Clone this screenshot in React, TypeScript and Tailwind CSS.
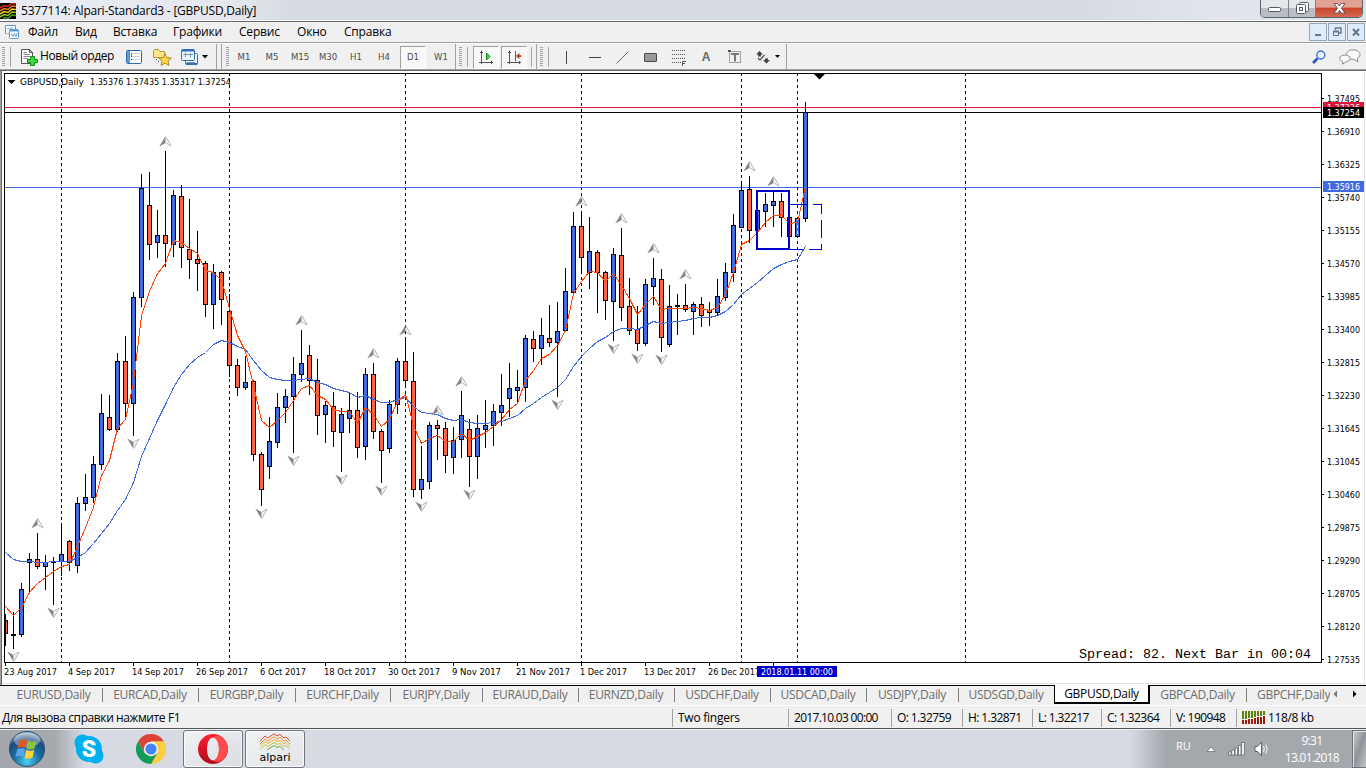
import type { ReactNode } from 'react';

// [high, body top, body bottom, low, up(1) / down(0)], one bar every 8px from x = 5
const BARS: number[][] = [
  [614, 620, 634, 646, 0], [612, 634, 636, 649, 1], [583, 589, 635, 637, 1], [553, 559, 563, 592, 1],
  [533, 559, 567, 569, 0], [555, 562, 567, 590, 1], [557, 562, 563, 605, 1], [523, 554, 562, 576, 1],
  [540, 541, 563, 571, 0], [497, 503, 566, 573, 1], [474, 497, 504, 511, 1], [456, 464, 498, 503, 1],
  [394, 413, 465, 470, 1], [395, 417, 430, 431, 0], [353, 361, 430, 432, 1], [336, 361, 404, 417, 0],
  [292, 297, 404, 436, 1], [174, 188, 298, 307, 1], [172, 205, 245, 260, 0], [210, 235, 243, 258, 1],
  [151, 235, 244, 267, 0], [190, 195, 245, 257, 1], [185, 196, 248, 268, 0], [199, 249, 260, 279, 0],
  [231, 259, 264, 291, 0], [261, 263, 305, 317, 0], [264, 272, 305, 329, 1], [271, 272, 300, 325, 0],
  [294, 311, 366, 377, 0], [359, 365, 388, 396, 0], [356, 382, 388, 390, 1], [380, 381, 455, 461, 0],
  [452, 454, 490, 506, 0], [417, 441, 467, 479, 1], [393, 407, 443, 448, 1], [389, 396, 408, 423, 1],
  [357, 374, 397, 453, 1], [330, 363, 375, 382, 1], [345, 355, 381, 395, 0], [359, 380, 416, 435, 0],
  [401, 405, 415, 443, 1], [392, 406, 432, 447, 0], [408, 414, 433, 472, 1], [393, 410, 419, 433, 1],
  [392, 410, 448, 458, 0], [368, 374, 447, 460, 1], [363, 374, 432, 439, 0], [429, 431, 451, 483, 0],
  [400, 404, 449, 453, 1], [358, 361, 405, 414, 1], [337, 361, 381, 385, 0], [352, 381, 490, 497, 0],
  [446, 479, 490, 499, 1], [422, 425, 482, 489, 1], [420, 425, 429, 460, 0], [422, 428, 456, 473, 0],
  [427, 440, 458, 474, 1], [391, 415, 440, 458, 1], [419, 429, 457, 487, 0], [415, 428, 457, 479, 1],
  [400, 425, 430, 448, 1], [404, 411, 426, 446, 1], [374, 405, 413, 426, 1], [363, 388, 399, 417, 1],
  [370, 387, 391, 403, 1], [335, 338, 388, 402, 1], [331, 339, 349, 362, 0], [318, 335, 349, 365, 1],
  [305, 338, 343, 347, 0], [302, 331, 343, 397, 1], [268, 291, 331, 332, 1], [212, 226, 293, 294, 1],
  [211, 226, 258, 274, 0], [217, 251, 273, 289, 1], [250, 252, 273, 313, 0], [271, 272, 301, 320, 0],
  [248, 254, 302, 341, 1], [228, 255, 308, 321, 0], [278, 306, 331, 335, 0], [306, 329, 344, 351, 0],
  [279, 284, 344, 346, 1], [258, 278, 287, 305, 1], [269, 279, 338, 352, 0], [285, 306, 345, 347, 1],
  [294, 305, 307, 335, 1], [284, 305, 310, 312, 0], [302, 304, 312, 335, 1], [297, 304, 316, 327, 0],
  [302, 310, 313, 326, 0], [279, 296, 313, 316, 1], [263, 272, 298, 301, 1], [214, 225, 273, 282, 1],
  [181, 190, 228, 228, 1], [176, 189, 231, 243, 0], [210, 210, 231, 231, 1], [193, 204, 212, 227, 1],
  [192, 201, 206, 227, 1], [193, 201, 218, 237, 0], [217, 217, 237, 237, 0], [218, 218, 237, 237, 1],
  [102, 112, 219, 222, 1],
];

const FAST = [
  606, 615, 607, 592, 583, 577, 571, 566, 564, 546, 527, 507, 475, 460, 428, 419, 382, 315, 291, 273, 263,
  240, 242, 248, 253, 270, 272, 280, 308, 335, 351, 385, 420, 427, 420, 412, 400, 388, 385, 395, 399, 409,
  411, 411, 423, 407, 414, 426, 419, 401, 394, 425, 443, 438, 435, 441, 441, 433, 440, 436, 432, 426, 419,
  409, 403, 380, 370, 358, 354, 345, 330, 293, 281, 271, 272, 281, 273, 285, 298, 314, 304, 296, 309, 308,
  308, 308, 307, 308, 310, 307, 294, 272, 244, 240, 232, 222, 215, 215, 223, 222, 186,
];

const SLOW = [
  552, 559, 561, 561, 562, 562, 561, 561, 561, 557, 552, 543, 533, 523, 510, 499, 482, 456, 438, 420, 404,
  387, 374, 364, 357, 352, 344, 340, 342, 346, 349, 360, 370, 377, 379, 380, 380, 379, 378, 382, 384, 388,
  390, 392, 397, 395, 399, 402, 402, 399, 397, 406, 412, 413, 414, 418, 420, 419, 422, 423, 423, 422, 421,
  418, 415, 408, 403, 397, 392, 387, 379, 366, 356, 348, 341, 337, 331, 328, 328, 329, 325, 321, 323, 322,
  321, 320, 318, 317, 317, 315, 311, 304, 294, 288, 282, 275, 268, 264, 261, 259, 246,
];

const UP = [
  [37, 523], [165, 141], [301, 320], [373, 353], [405, 330], [437, 410], [461, 381], [581, 201], [621, 218],
  [653, 248], [685, 274], [749, 166], [773, 181],
];
const DOWN = [
  [13, 656], [53, 612], [133, 443], [261, 513], [293, 460], [341, 479], [381, 490], [421, 506], [469, 494],
  [557, 404], [613, 348], [637, 358], [661, 359],
];

const PRICES = [
  '1.37495', '1.36910', '1.36325', '1.35740', '1.35155', '1.34570', '1.33985', '1.33400', '1.32815',
  '1.32230', '1.31645', '1.31045', '1.30460', '1.29875', '1.29290', '1.28705', '1.28120', '1.27535',
];

const DATES: [string, number][] = [
  ['23 Aug 2017', 53], ['4 Sep 2017', 47], ['14 Sep 2017', 52], ['26 Sep 2017', 52], ['6 Oct 2017', 46],
  ['18 Oct 2017', 52], ['30 Oct 2017', 52], ['9 Nov 2017', 49], ['21 Nov 2017', 54], ['1 Dec 2017', 47],
  ['13 Dec 2017', 52], ['26 Dec 2017', 52],
];

const line = (ys: number[]) => ys.map((y, i) => `${5.5 + i * 8},${y + 0.5}`).join(' ');

function Label({ x, y, w, fill = '#000', children }: { x: number; y: number; w: number; fill?: string; children: string }) {
  return (
    <text x={x} y={y} fill={fill} textLength={w} lengthAdjust="spacingAndGlyphs" fontSize="9.3">
      {children}
    </text>
  );
}

function Fractal({ x, y, down }: { x: number; y: number; down?: boolean }) {
  return (
    <g transform={`translate(${x + 0.5} ${y + 0.5}) scale(1 ${down ? -1 : 1})`}>
      <path d="M0 -5.5 L-6.2 5 L0 1.6 Z" fill="#858585" />
      <path d="M0.3 -5 L5.6 4.4 L0.5 1.6" fill="#fff" stroke="#a4adb6" strokeWidth="0.9" />
      <path d="M1.3 -2 V1.2" stroke="#e6dcae" strokeWidth="0.8" />
    </g>
  );
}

function Chart() {
  return (
    <svg width="1366" height="614" viewBox="0 71 1366 614" className="block shrink-0" fontFamily='"DejaVu Sans Condensed", "DejaVu Sans", sans-serif'>
      <rect x="0" y="71" width="1366" height="614" fill="#fff" />
      <g shapeRendering="crispEdges">
        <rect x="0" y="71" width="1" height="614" fill="#a0a0a0" />
        <rect x="1" y="71" width="1" height="614" fill="#696969" />
        <rect x="1364" y="71" width="1" height="614" fill="#e3e3e3" />
        <rect x="2" y="683" width="1363" height="1" fill="#e3e3e3" />
        {[61, 229, 405, 581, 741, 965].map((x) => (
          <path key={x} d={`M${x}.5 73V662`} stroke="#000" strokeDasharray="3 3" />
        ))}
        <path d="M5 107.5H1321" stroke="#dc143c" />
        <path d="M5 112.5H1321" stroke="#000" />
        <path d="M5 187.5H1321" stroke="#4169e1" />
        <path d="M797.5 73V662" stroke="#0000cd" strokeDasharray="3 3" />
        {BARS.map(([high, top, bottom, low, up], i) => {
          const x = 5 + i * 8;
          const left = i === 0 ? x : x - 2;
          return (
            <g key={i}>
              <rect x={x} y={high} width="1" height={low - high} fill="#000" />
              <rect x={left} y={top} width={x + 3 - left} height={bottom - top} fill="#000" />
              {bottom - top > 2 && (
                <rect x={left + 1} y={top + 1} width={x + 1 - left} height={bottom - top - 2} fill={up ? '#4169e1' : '#ff6347'} />
              )}
            </g>
          );
        })}
        <path d="M797.5 219V236" stroke="#c8d4ff" strokeDasharray="3 3" />
        <polyline points={line(SLOW)} fill="none" stroke="#4169e1" />
        <polyline points={line(FAST)} fill="none" stroke="#ff4500" />
        <rect x="757" y="191" width="32" height="58" fill="none" stroke="#0000cd" strokeWidth="2" />
        <path
          d="M790 204.5H808M813 204.5H822M821.5 204V214M821.5 220V238M821.5 244V250M790 249.5H803M809 249.5H822"
          stroke="#0000cd"
        />
        <path d="M4.5 662.5V73.5H1321.5V662.5Z" fill="none" stroke="#000" />
        {PRICES.map((p, i) => (
          <rect key={p} x="1322" y={98 + i * 33} width="2" height="1" fill="#000" />
        ))}
        {Array.from({ length: 13 }, (_, i) => (
          <rect key={i} x={5 + i * 64} y="663" width="1" height="3" fill="#000" />
        ))}
      </g>
      {UP.map(([x, y]) => <Fractal key={`u${x}`} x={x} y={y} />)}
      {DOWN.map(([x, y]) => <Fractal key={`d${x}`} x={x} y={y} down />)}
      <path d="M814 74H825L819.5 79.5Z" />
      <path d="M7.5 80H15.5L11.5 84Z" />
      <Label x={20} y={85} w={64}>GBPUSD,Daily</Label>
      <Label x={90} y={85} w={141}>1.35376 1.37435 1.35317 1.37254</Label>
      {PRICES.map((p, i) => <Label key={p} x={1327} y={102 + i * 33} w={33}>{p}</Label>)}
      <rect x="1323" y="102" width="41" height="12" fill="#dc143c" />
      <Label x={1327} y={111} w={33} fill="#fff">1.37336</Label>
      <rect x="1323" y="107" width="41" height="11" fill="#000" />
      <Label x={1327} y={116} w={33} fill="#fff">1.37254</Label>
      <rect x="1323" y="181" width="41" height="11" fill="#4169e1" />
      <Label x={1327} y={190} w={33} fill="#fff">1.35916</Label>
      {DATES.map(([d, w], i) => <Label key={d} x={4 + i * 64} y={675} w={w}>{d}</Label>)}
      <rect x="757" y="666" width="80" height="11" fill="#0000cd" />
      <Label x={761} y={675} w={72} fill="#fff">2018.01.11 00:00</Label>
      <text x="1079" y="658" fontSize="12" fontFamily='"Liberation Mono", monospace' textLength="232" lengthAdjust="spacingAndGlyphs">
        Spread: 82. Next Bar in 00:04
      </text>
    </svg>
  );
}

function WaveLogo() {
  return (
    <svg width="16" height="16" viewBox="0 0 16 16" fill="none" strokeWidth="1.5">
      <rect width="16" height="16" fill="#000" />
      <path d="M0 5L4 2.5L8 3.5L12 0L16 1" stroke="#d92b12" />
      <path d="M0 8L4 5.5L8 6.5L12 3L16 3.5" stroke="#ee7a18" />
      <path d="M0 11L4 8.5L8 9.5L12 6L16 6.5" stroke="#e9cf20" />
      <path d="M0 14L4 11.5L8 12.5L12 9L16 9.5" stroke="#9bc61c" />
      <path d="M3 15.5L5 14.5L8 15.5L12 12L16 12.5" stroke="#3e9e1e" />
    </svg>
  );
}

function TitleBar() {
  return (
    <div className="flex h-[21px] shrink-0 items-start border-b border-white bg-[linear-gradient(90deg,#e9edf3_0,#e4e8ee_230px,#d6dae3_290px,#d6dae3_1080px,#e2e6ec_1220px,#dde1e8_100%)]">
      <div className="mt-[3px] w-[21px]"><WaveLogo /></div>
      <div className="mt-[2px] text-[12px] leading-[18px] tracking-[-0.23px] whitespace-nowrap">5377114: Alpari-Standard3 - [GBPUSD,Daily]</div>
      <div className="mr-[3px] ml-auto flex h-[18px] w-[103px] overflow-hidden rounded-b-[5px] border border-t-0 border-[#5b6270]">
        <div className="flex w-[28px] items-center justify-center border-r border-[#7b808a] bg-linear-to-b from-[#e4e6e9] from-45% to-[#b9bdc4] to-50%">
          <svg width="13" height="6" className="mt-[3px]"><rect x="0.5" y="0.5" width="12" height="4" rx="1" fill="#fff" stroke="#555a68" /></svg>
        </div>
        <div className="flex w-[27px] items-center justify-center border-r border-[#7b808a] bg-linear-to-b from-[#e4e6e9] from-45% to-[#b9bdc4] to-50%">
          <svg width="13" height="13" fill="#fff" stroke="#555a68">
            <rect x="3.5" y="0.5" width="9" height="9" rx="1" />
            <rect x="0.5" y="2.5" width="9" height="9" rx="1" />
            <rect x="3.5" y="5.5" width="3" height="3" />
          </svg>
        </div>
        <div className="flex flex-1 items-center justify-center bg-linear-to-b from-[#e2a193] from-40% via-[#c8452c] via-50% to-[#d46a50]">
          <svg width="13" height="11" viewBox="0 0 13 11">
            <path d="M1 0.5H4.5L6.5 3L8.5 0.5H12L8.5 5.2L12 10.2H8.5L6.5 7.6L4.5 10.2H1L4.5 5.2Z" fill="#fff" stroke="#5a4a52" strokeWidth="0.9" />
          </svg>
        </div>
      </div>
    </div>
  );
}

function MdiButton({ children }: { children: ReactNode }) {
  return (
    <div className="flex h-[18px] w-[18px] items-center justify-center border border-[#94a6b8] bg-[#deebf8]">
      <svg width="10" height="10" viewBox="0 0 10 10" fill="none" stroke="#667887">{children}</svg>
    </div>
  );
}

function MenuBar() {
  return (
    <div className="flex h-[22px] shrink-0 items-center border-t border-b border-t-[#696969] border-b-[#a0a0a0] bg-[#f0f0f0]">
      <svg width="14" height="14" viewBox="0 0 14 14" className="mr-[9px] ml-[5px]" fill="#fff" stroke="#5b9bd5">
        <path d="M0.5 8.5V0.5H10.5V4" /><path d="M2 4.5L3.5 3L5 4.5L7 2.5L8 3.5" fill="none" />
        <path d="M0.5 8.5H4" strokeDasharray="1 1" />
        <rect x="4.5" y="4.5" width="9" height="9" rx="1" /><path d="M4.5 5.5H13" strokeWidth="2" />
        <path d="M6 8.5L8 11.5L9.5 8.5L11 11.5L12.5 8" fill="none" />
      </svg>
      <div className="flex flex-1 text-[12px] leading-[18px] tracking-[-0.2px]">
        <span className="w-[47px]">Файл</span>
        <span className="w-[38px]">Вид</span>
        <span className="w-[60px]">Вставка</span>
        <span className="w-[66px]">Графики</span>
        <span className="w-[58px]">Сервис</span>
        <span className="w-[47px]">Окно</span>
        <span>Справка</span>
      </div>
      <div className="mr-px flex gap-px">
        <MdiButton><path d="M2 8H8" strokeWidth="2" /></MdiButton>
        <MdiButton><path d="M3.5 3V1H9V6H7" strokeWidth="1.4" /><path d="M1.5 4.5H6.5V8.5H1.5Z" /><path d="M1 4.5H7" strokeWidth="2" /></MdiButton>
        <MdiButton><path d="M2 2L8 8.5M8 2L2 8.5" strokeWidth="2" /></MdiButton>
      </div>
    </div>
  );
}

function Grip() {
  return <div className="h-[20px] w-[3px] shrink-0 bg-[repeating-linear-gradient(180deg,#a0a0a0_0_1px,#f0f0f0_1px_2px)]" />;
}

function Rule({ className = '' }: { className?: string }) {
  return <div className={`w-px shrink-0 bg-[#a0a0a0] ${className}`} />;
}

function Tool({ children }: { children: ReactNode }) {
  return <div className="flex h-[22px] w-[28px] shrink-0 items-center justify-center">{children}</div>;
}

function Pressed({ children }: { children: ReactNode }) {
  return (
    <div className="flex h-[23px] w-[26px] shrink-0 items-center justify-center border border-t-[#a0a0a0] border-r-white border-b-white border-l-[#a0a0a0] bg-[#f8f8f8]">
      {children}
    </div>
  );
}

const TF = 'flex w-[28px] shrink-0 justify-center';

function Toolbar() {
  return (
    <div className="flex h-[28px] shrink-0 items-center border-t border-b border-t-white border-b-[#696969] bg-[#f0f0f0] shadow-[inset_0_-1px_0_#a0a0a0]">
      <div className="w-[2px]" /><Grip />
      <Rule className="ml-[5px] h-[20px]" />
      <svg width="17" height="17" viewBox="0 0 17 17" className="ml-[10px]" fill="none">
        <path d="M0.5 0.5H8.5L11.5 3.5V14.5H0.5Z" fill="#fff" stroke="#555" /><path d="M8.5 0.5V3.5H11.5" stroke="#555" />
        <path d="M2.5 3.5H6M2.5 5.5H9M2.5 7.5H9M2.5 9.5H7" stroke="#888" />
        <path d="M9.5 7.5H13.5V10.5H16.5V13.5H13.5V16.5H9.5V13.5H6.5V10.5H9.5Z" fill="#3ddb3d" stroke="#128a12" />
      </svg>
      <div className="ml-[2px] w-[86px] pb-[2px] text-[12px] tracking-[-0.4px] whitespace-nowrap">Новый ордер</div>
      <svg width="16" height="14" viewBox="0 0 16 14" fill="none">
        <rect x="0.5" y="0.5" width="15" height="13" rx="1" fill="#fff" stroke="#2a6ab0" />
        <rect x="1" y="1" width="3" height="12" fill="#5b9bd5" />
        <path d="M6 3.5H14M6 6.5H14M6 9.5H14" stroke="#c3d5e8" /><path d="M5 3.5H6M5 6.5H6" stroke="#c33" /><path d="M5 5H6M5 9.5H6" stroke="#222" />
      </svg>
      <svg width="19" height="17" viewBox="0 0 19 17" className="ml-[11px]">
        <path d="M0.5 7.5V1.5L1.5 0.5H5.5L7 2.5H11.5V8.5H0.5Z" fill="#ffe58a" stroke="#b79a3d" />
        <path d="M3.5 10V12M5 12.5H7" stroke="#444" strokeDasharray="1 1" />
        <path d="M12 4.5L13.8 8.6L18.3 9L15 12.1L15.9 16.4L12 14.2L8.1 16.4L9 12.1L5.7 9L10.2 8.6Z" fill="#ffd84d" stroke="#b3861c" />
      </svg>
      <svg width="18" height="17" viewBox="0 0 18 17" className="ml-[9px]" fill="#eaf3fc" stroke="#2f6fb3">
        <rect x="4.5" y="4.5" width="12" height="11" rx="1" /><path d="M5 15H16" strokeWidth="2" />
        <rect x="0.5" y="0.5" width="13" height="11" rx="1" /><path d="M1 1.5H13" strokeWidth="2" />
        <path d="M2.5 5.5H12M4.5 3.5V8M9.5 4V8M6 13.5H14" stroke="#5b7fa5" strokeWidth="0.8" />
      </svg>
      <svg width="6" height="4" className="ml-[3px]"><path d="M0 0H6L3 3.5Z" /></svg>
      <Rule className="ml-[8px] h-[26px]" /><Rule className="ml-[4px] h-[26px]" />
      <div className="ml-[4px]"><Grip /></div>
      <div className="flex items-center pl-px font-['DejaVu_Sans_Condensed','DejaVu_Sans',sans-serif] text-[9.5px] text-[#4c4c4c]">
        <span className={TF}>M1</span><span className={TF}>M5</span><span className={TF}>M15</span><span className={TF}>M30</span>
        <span className={TF}>H1</span><span className={TF}>H4</span>
        <span className="mr-0 ml-[2px]"><Pressed>D1</Pressed></span>
        <span className="flex w-[30px] justify-center">W1</span>
      </div>
      <Rule className="ml-[-1px] h-[26px]" />
      <div className="ml-[3px]"><Grip /></div>
      <Rule className="ml-[5px] h-[20px]" />
      <div className="ml-[5px] flex gap-[2px]">
        <Pressed>
          <svg width="15" height="15" viewBox="0 0 15 15" fill="none" stroke="#555">
            <path d="M2.5 0.5V14M0 12.5H14M1 2.5H4M12.5 11V14" /><path d="M7.5 3L11 6.5L7.5 10Z" fill="#4dd14d" stroke="#128a12" />
          </svg>
        </Pressed>
        <Pressed>
          <svg width="15" height="15" viewBox="0 0 15 15" fill="none" stroke="#555">
            <path d="M2.5 0.5V14M0 12.5H14M1 2.5H4M12.5 11V14" /><path d="M8.5 1V11" stroke="#1c6a9e" />
            <path d="M9.5 6L12 3.5V5.5H14V6.5H12V8.5Z" fill="#b33a10" stroke="#b33a10" strokeWidth="0.7" />
          </svg>
        </Pressed>
      </div>
      <Rule className="ml-[4px] h-[20px]" /><Rule className="ml-[4px] h-[26px]" />
      <div className="ml-[3px]"><Grip /></div>
      <Rule className="ml-[5px] h-[20px]" />
      <div className="flex items-center pl-[3px]">
        <Tool><div className="h-[13px] w-px bg-[#444]" /></Tool>
        <Tool><div className="ml-[2px] h-px w-[12px] bg-[#444]" /></Tool>
        <Tool><svg width="13" height="13"><path d="M0.5 12.5L12.5 0.5" stroke="#666" /></svg></Tool>
        <Tool><div className="h-[9px] w-[13px] rounded-[1px] border border-[#4a4a4a] bg-[#999]" /></Tool>
        <Tool>
          <svg width="15" height="17" viewBox="0 0 15 17" stroke="#555" fill="none">
            <path d="M1 1.5H15M1 5.5H15M1 9.5H15M1 13.5H10" strokeDasharray="1 1" /><path d="M11.5 17V12.5H15M11.5 14.5H14" />
          </svg>
        </Tool>
        <Tool><span className="font-['Liberation_Sans',sans-serif] text-[12px] font-bold text-[#666]">A</span></Tool>
        <Tool>
          <svg width="14" height="14" viewBox="0 0 14 14" className="ml-[2px]" stroke="#555" fill="none">
            <rect x="1.5" y="1.5" width="11" height="11" strokeDasharray="1 1" /><path d="M3 4H11M7 4V11.5" strokeWidth="2" stroke="#777" /><path d="M0 1H3" strokeWidth="2" />
          </svg>
        </Tool>
        <Tool>
          <svg width="14" height="13" viewBox="0 0 14 13" className="ml-[2px]" fill="#444">
            <path d="M3.5 0L7 3.5H5V5.5H2V3.5H0Z" /><path d="M10.5 12.5L14 9H12V7.5H9V9H7Z" /><path d="M2 7L4 9L8.5 4" fill="none" stroke="#555" strokeWidth="1.3" />
          </svg>
        </Tool>
        <svg width="5" height="4" className="ml-[-1px]"><path d="M0 0H5L2.5 3Z" /></svg>
      </div>
      <Rule className="ml-[6px] h-[26px]" />
      <svg width="14" height="14" viewBox="0 0 14 14" className="ml-auto" fill="none">
        <path d="M5.5 8.5L1 13" stroke="#2458c8" strokeWidth="2.6" /><circle cx="8.8" cy="5" r="4" fill="#eef4ff" stroke="#3a70d8" strokeWidth="1.4" />
      </svg>
      <svg width="22" height="16" viewBox="0 0 22 16" className="mr-[5px] ml-[13px]" fill="#fbfbfb" stroke="#8d8d8d">
        <path d="M14 0.8C18 0.8 21 2.8 21 5.6C21 8 19.5 9.2 18 9.8L19 13L15 10.3C10.5 10.6 7.5 8.5 7.5 5.6C7.5 2.8 10.3 0.8 14 0.8Z" />
        <path d="M6 6C9 6 11 7.5 11 9.4C11 11.5 9 13 6.5 13L3.5 15.2L3.7 12.5C1.8 12 0.7 10.9 0.7 9.4C0.7 7.5 3 6 6 6Z" />
      </svg>
    </div>
  );
}

const TABS: [string, string][] = [
  ['EURUSD', 'w-[97px]'], ['EURCAD', 'w-[96px]'], ['EURGBP', 'w-[97px]'], ['EURCHF', 'w-[95px]'], ['EURJPY', 'w-[92px]'],
  ['EURAUD', 'w-[96px]'], ['EURNZD', 'w-[96px]'], ['USDCHF', 'w-[96px]'], ['USDCAD', 'w-[96px]'], ['USDJPY', 'w-[92px]'],
  ['USDSGD', 'w-[95px]'], ['GBPUSD', 'w-[96px]'], ['GBPCAD', 'w-[97px]'], ['GBPCHF', 'w-[83px]'],
];

function SymbolTabs() {
  return (
    <div className="flex h-[21px] shrink-0 items-start border-b border-white bg-[#f0f0f0] pl-[6px] text-[12px] leading-[18px] tracking-[-0.3px] text-[#6d6d6d] shadow-[inset_0_1px_0_#000]">
      {TABS.map(([symbol, width]) =>
        symbol === 'GBPUSD' ? (
          <div key={symbol} className={`${width} h-[19px] shrink-0 border border-t-0 border-r-2 border-b-2 border-black bg-white text-center text-black`}>
            {symbol},Daily
          </div>
        ) : (
          <div key={symbol} className={`${width} flex h-[19px] shrink-0 items-center overflow-hidden`}>
            <div className={symbol === 'GBPCHF' ? 'pl-[10px] whitespace-nowrap' : 'flex-1 pr-px text-center'}>{symbol},Daily</div>
            {symbol !== 'USDSGD' && symbol !== 'GBPCHF' && <div className="h-[14px] w-px bg-[#808080]" />}
          </div>
        ),
      )}
      <svg width="30" height="18" className="ml-[3px]">
        <path d="M4 5.5V12.5L0.5 9Z" fill="#777" /><path d="M20 5.5V12.5L23.5 9Z" fill="#000" />
      </svg>
    </div>
  );
}

function StatusBar() {
  const cell = 'flex h-[18px] shrink-0 items-center border-l border-[#a0a0a0] pl-[5px] whitespace-nowrap';
  return (
    <div className="flex h-[23px] shrink-0 items-center border-b border-[#555] bg-[#f0f0f0] pt-px text-[12px] leading-[16px] tracking-[-0.6px]">
      <div className="w-[672px] pl-[2px] tracking-[-0.4px]">Для вызова справки нажмите F1</div>
      <div className={`${cell} w-[116px] tracking-[-0.25px]`}>Two fingers</div>
      <div className={`${cell} w-[103px] tracking-[-0.7px]`}>2017.10.03 00:00</div>
      <div className={`${cell} w-[71px]`}>O: 1.32759</div>
      <div className={`${cell} w-[70px]`}>H: 1.32871</div>
      <div className={`${cell} w-[69px]`}>L: 1.32217</div>
      <div className={`${cell} w-[69px]`}>C: 1.32364</div>
      <div className={`${cell} w-[66px]`}>V: 190948</div>
      <div className={`${cell} flex-1 tracking-[-0.35px]`}>
        <svg width="23" height="14" className="mr-[3px]" shapeRendering="crispEdges">
          {[8, 8, 7, 7, 6, 5, 5, 4].map((h, i) => (
            <g key={i}>
              <rect x={i * 3} y="0" width="2" height={h} fill="#5b8009" />
              <rect x={i * 3} y={h + 1} width="2" height={12 - h} fill="#9b1b0a" />
            </g>
          ))}
        </svg>
        118/8 kb
      </div>
    </div>
  );
}

function Taskbar() {
  return (
    <div className="flex h-[39px] shrink-0 items-center border-t border-[#eceff3] bg-[linear-gradient(90deg,#a3a7ab_0,#a6aaae_55px,#d6dae3_85px,#d6dae3_1130px,#a3a8ac_1166px,#a3a8ac_100%)]">
      <svg width="38" height="38" viewBox="0 0 38 38" className="ml-[8px]">
        <defs>
          <radialGradient id="orb" cx="50%" cy="85%" r="80%">
            <stop offset="0" stopColor="#4ed0f2" /><stop offset="0.45" stopColor="#1d6fa8" /><stop offset="0.8" stopColor="#1c4a78" /><stop offset="1" stopColor="#8fb0c8" />
          </radialGradient>
        </defs>
        <circle cx="19" cy="19" r="17.5" fill="url(#orb)" stroke="#28506f" />
        <ellipse cx="19" cy="10" rx="13" ry="7.5" fill="#fff" opacity="0.35" />
        <path d="M11.5 11Q15.5 8.5 19 10.5L17.5 18Q14 16 9.5 18Z" fill="#e8541e" />
        <path d="M20 11Q24 13 28.5 10.5L26.5 18.5Q22.5 20.5 18.5 18.5Z" fill="#8cc43c" />
        <path d="M9.3 19.3Q13.5 17 17.2 19.3L15.5 27Q12 25 7.5 27Z" fill="#5aa5e8" />
        <path d="M18.3 19.8Q22.3 22 26.3 19.8L24.5 27.5Q20.5 30 16.5 27.7Z" fill="#ffd23c" />
      </svg>
      <svg width="30" height="30" viewBox="0 0 30 30" className="mb-px ml-[28px]">
        <g fill="#00aff0"><circle cx="15" cy="15" r="13" /><circle cx="8.5" cy="8.5" r="8" /><circle cx="21.5" cy="21.5" r="8" /></g>
        <text x="15" y="23" textAnchor="middle" fontSize="23" fontWeight="900" fill="#fff" fontFamily="Roboto, sans-serif">S</text>
      </svg>
      <svg width="30" height="30" viewBox="0 0 30 30" className="mb-px ml-[32px]">
        <path d="M2 7.5A15 15 0 0 1 28 7.5H15L8.5 18.7Z" fill="#db4437" />
        <path d="M28 7.5A15 15 0 0 1 15 30L21.5 18.7L15 7.5Z" fill="#ffcd40" />
        <path d="M15 30A15 15 0 0 1 2 7.5L8.5 18.7Q15 25 21.5 18.7Z" fill="#0f9d58" />
        <circle cx="15" cy="15" r="7.2" fill="#f1f1f1" /><circle cx="15" cy="15" r="5.6" fill="#4285f4" />
      </svg>
      <div className="ml-[17px] flex h-[38px] w-[60px] items-center justify-center rounded-[3px] border border-[#6f757e] bg-linear-to-br from-[#f1f2f4] to-[#d9dce1] shadow-[inset_0_0_0_1px_#fafafa]">
        <svg width="30" height="30" viewBox="0 0 30 30">
          <defs><linearGradient id="op" x2="0" y2="1"><stop offset="0" stopColor="#ff2035" /><stop offset="1" stopColor="#b0091b" /></linearGradient></defs>
          <path fillRule="evenodd" d="M15 0A15 15 0 1 0 15 30A15 15 0 1 0 15 0ZM15 3.5C18.5 3.5 21 8.5 21 15S18.5 26.5 15 26.5S9 21.5 9 15S11.5 3.5 15 3.5Z" fill="url(#op)" />
          <path d="M15 3.5C19 0.5 24 2.5 25.5 4.5A15 15 0 0 1 25.5 25.5C23 28 18.5 29 15 26.5C18.5 26.5 21 21.5 21 15S18.5 3.5 15 3.5Z" fill="#ff4b4b" />
        </svg>
      </div>
      <div className="ml-[2px] flex h-[38px] w-[60px] flex-col items-center rounded-[3px] border border-[#6f757e] bg-linear-to-br from-[#f1f2f4] to-[#e2e4e8] pt-[2px] shadow-[inset_0_0_0_1px_#fafafa]">
        <svg width="30" height="18" viewBox="0 0 30 18" fill="none" strokeWidth="0.9">
          <path d="M0 8L5 3L8 5L14 0.7L17 3L20 1.5L24 5L26 4L30 8" stroke="#d8361c" />
          <path d="M0 11L5 6L8 8L14 3.7L17 6L20 4.5L24 8L26 7L30 11" stroke="#ec8a20" />
          <path d="M0 13.5L5 8.5L8 10.5L14 6.5L17 8.5L20 7.5L24 10.5L26 9.5L30 13.5" stroke="#f0a91e" />
          <path d="M0 16.5L5 11.5L8 13.5L14 9.5L17 11.5L20 10.5L24 13.5L26 12.5L30 16.5" stroke="#b9c41f" />
          <path d="M7 17L14 12.5L17 14.5L20 13.5L24 17" stroke="#5ca32a" />
        </svg>
        <span className="font-['DejaVu_Sans',sans-serif] text-[11px] leading-[14px]">alpari</span>
      </div>
      <div className="ml-auto flex items-center text-white">
        <span className="mr-[15px] pb-[5px] text-[11px]">RU</span>
        <svg width="10" height="6" className="mr-[12px]"><path d="M1 5.5L5 1L9 5.5Z" fill="#fff" stroke="#60666c" strokeWidth="0.7" /></svg>
        <svg width="18" height="14" viewBox="0 0 18 14" className="mr-[8px]" fill="#fff" stroke="#60666c" strokeWidth="0.8">
          <rect x="0.5" y="10" width="2.6" height="3" /><rect x="3.8" y="8" width="2.6" height="5" /><rect x="7.1" y="6" width="2.6" height="7" />
          <rect x="10.4" y="3.5" width="2.6" height="9.5" /><rect x="13.7" y="0.5" width="2.6" height="12.5" />
        </svg>
        <svg width="16" height="16" viewBox="0 0 16 16" className="mr-[15px]" fill="none">
          <path d="M1 5.5H3.5L7.5 1V15L3.5 10.5H1Z" fill="#fff" stroke="#50565c" strokeWidth="0.9" /><path d="M9.5 5Q11.2 8 9.5 11M11.8 3.5Q14.5 8 11.8 12.5" stroke="#f4f4f4" />
        </svg>
        <div className="mr-[13px] text-center text-[12px] leading-[17px] tracking-[-0.7px]">
          <div>9:31</div>
          <div>13.01.2018</div>
        </div>
        <div className="h-[38px] w-[14px] border border-r-0 border-[#6e7478] bg-linear-to-br from-[#c9cdd0] via-[#8e9499] to-[#c0c5c8] shadow-[inset_1px_1px_0_#dfe3e6]" />
      </div>
    </div>
  );
}

export default function App() {
  return (
    <div className="flex h-[768px] w-[1366px] flex-col overflow-hidden bg-[#f0f0f0] font-['Open_Sans','Noto_Sans',sans-serif] text-black">
      <TitleBar />
      <MenuBar />
      <Toolbar />
      <Chart />
      <SymbolTabs />
      <StatusBar />
      <Taskbar />
    </div>
  );
}
